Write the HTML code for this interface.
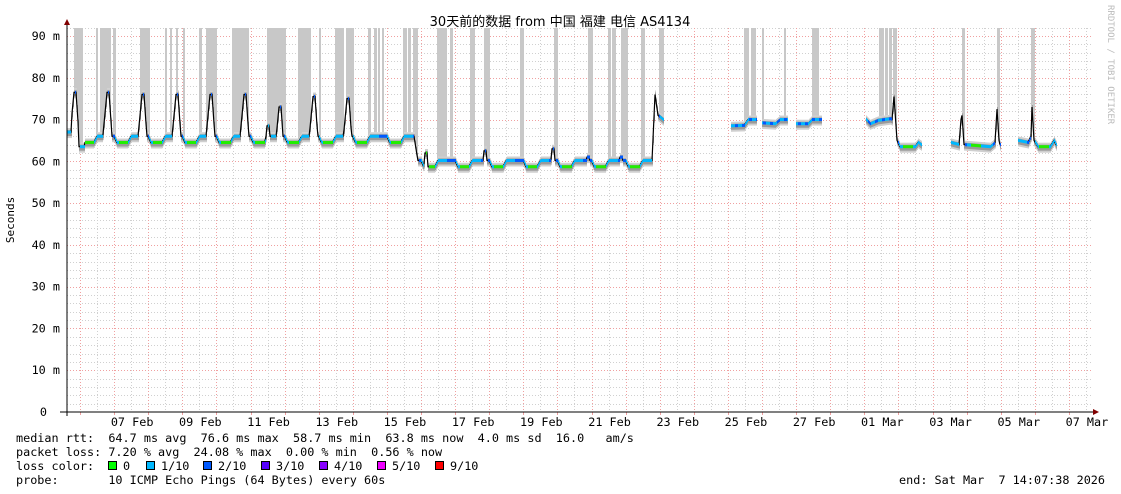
<!DOCTYPE html>
<html><head><meta charset="utf-8"><style>
html,body{margin:0;padding:0;background:#fff;}
svg{display:block;}
text{font-family:"DejaVu Sans Mono","Liberation Mono",monospace;font-size:11.8px;fill:#000;}
</style></head><body>
<svg id="s" width="1121" height="494" xmlns="http://www.w3.org/2000/svg">
<rect width="1121" height="494" fill="#fff"/>
<g id="grid"></g>
<g id="bars"></g>
<g id="data"></g>
<line x1="67" y1="24" x2="67" y2="416" stroke="#000" stroke-width="1"/>
<line x1="60" y1="412" x2="1094" y2="412" stroke="#000" stroke-width="1"/>
<polygon points="64,25 70,25 67,19" fill="#800000"/>
<polygon points="1093,409 1093,415 1099,412" fill="#800000"/>
<text x="560" y="26" text-anchor="middle" style="font-family:'DejaVu Sans','Noto Sans CJK SC',sans-serif;font-size:13px">30天前的数据 from  中国 福建 电信 AS4134</text>
<text transform="translate(14,220) rotate(-90)" text-anchor="middle" style="font-size:11px">Seconds</text>
<text transform="translate(1108,5) rotate(90)" style="font-size:9px;fill:#bbb">RRDTOOL / TOBI OETIKER</text>
<g id="ylab"></g>
<g id="xlab"></g>
<text x="16" y="442" xml:space="preserve">median rtt:  64.7 ms avg  76.6 ms max  58.7 ms min  63.8 ms now  4.0 ms sd  16.0   am/s</text>
<text x="16" y="456" xml:space="preserve">packet loss: 7.20 % avg  24.08 % max  0.00 % min  0.56 % now</text>
<text x="16" y="470" xml:space="preserve">loss color:</text>
<text x="16" y="484" xml:space="preserve">probe:       10 ICMP Echo Pings (64 Bytes) every 60s</text>
<text x="1105" y="484" text-anchor="end" xml:space="preserve">end: Sat Mar  7 14:07:38 2026</text>
<g id="leg"></g>
</svg>
<script>
var NS="http://www.w3.org/2000/svg";
function el(p,t,a,txt){var e=document.createElementNS(NS,t);for(var k in a)e.setAttribute(k,a[k]);if(txt!=null)e.textContent=txt;document.getElementById(p).appendChild(e);return e;}
function Y(v){return 412-v*4.178;}
for(var v=2;v<=92;v+=2){var y=Math.round(Y(v))+0.5;var maj=(v%10==0);
el('grid','line',{x1:67,x2:1093,y1:y,y2:y,stroke:maj?'#f0a0a0':'#d0d0d0','stroke-dasharray':'1,2','stroke-width':1});}
var D=34.1;
for(var k=-1;k<32;k++){var xr=80+D*k,xm=xr+D/2;
if(xm>67&&xm<1093)el('grid','line',{x1:Math.round(xm)+0.5,x2:Math.round(xm)+0.5,y1:28,y2:412,stroke:'#d0d0d0','stroke-dasharray':'1,2'});
if(xr>67&&xr<1093){el('grid','line',{x1:Math.round(xr)+0.5,x2:Math.round(xr)+0.5,y1:28,y2:412,stroke:'#f0a0a0','stroke-dasharray':'1,2'});
el('grid','line',{x1:Math.round(xr)+0.5,x2:Math.round(xr)+0.5,y1:412,y2:415,stroke:'#f0a0a0'});}}
for(var v=10;v<=90;v+=10)el('ylab','text',{x:60,y:Y(v)+4,'text-anchor':'end'},v+' m');
el('ylab','text',{x:47,y:416,'text-anchor':'end'},'0');
var labs=['07 Feb','09 Feb','11 Feb','13 Feb','15 Feb','17 Feb','19 Feb','21 Feb','23 Feb','25 Feb','27 Feb','01 Mar','03 Mar','05 Mar','07 Mar'];
for(var i=0;i<labs.length;i++)el('xlab','text',{x:81+D*(1.5+2*i),y:426,'text-anchor':'middle'},labs[i]);
var lc=[['#00ff00','0',108],['#00b8ff','1/10',146],['#0059ff','2/10',203],['#5500ff','3/10',261],['#8800ff','4/10',319],['#ee00ff','5/10',377],['#ff0000','9/10',435]];
lc.forEach(function(c){el('leg','rect',{x:c[2]+0.5,y:461.5,width:8,height:8,fill:c[0],stroke:'#000'});el('leg','text',{x:c[2]+15,y:470},c[1]);});
function tt(x){var t=((x-80)/D)%1;if(t<0)t+=1;return t;}
function base(x,off){var t=tt(x),b;
if(t<0.08)b=66-t/0.08*1.5;else if(t<0.4)b=64.5;else if(t<0.5)b=64.5+(t-0.4)/0.1*1.5;else b=66;return b+off;}
function spike(x,b,list){var v=b;list.forEach(function(s){var d=Math.abs(x-s[0]);var h=s[1]-(d<=1?0:(d-1)*(x<s[0]?2.5:3.5));if(h>v)v=h;});return v;}
var s1=[[75,76.5],[108,76.5],[143,76],[177,76],[211,76],[245,76],[268,68.5],[280,73],[314,75.5],[348,75]];
var s2=[[426,62],[485,62.5],[553,63],[588,61],[621,61]];
function lin(x,pts){for(var i=0;i<pts.length-1;i++){if(x>=pts[i][0]&&x<=pts[i+1][0]){var a=pts[i],b=pts[i+1];return a[1]+(b[1]-a[1])*(x-a[0])/(b[0]-a[0]||1);}}return null;}
function f(x){
if(x<67)return null;
if(x<72)return 67;
if(x<405){if(x>=79&&x<=84)return 63.5;return spike(x,base(x,0),s1);}
if(x<418)return lin(x,[[405,66],[414,66],[418,60]]);
if(x<=652)return spike(x,base(x,-5.8),s2);
if(x<=663)return lin(x,[[652,60],[655,76],[658,71],[663,70]]);
if(x>=731&&x<=756)return lin(x,[[731,68.5],[744,68.6],[748,70],[756,70]]);
if(x>=762&&x<=787)return lin(x,[[762,69.2],[775,69],[780,70],[787,70]]);
if(x>=796&&x<=821)return lin(x,[[796,69],[808,69],[812,70],[821,70]]);
if(x>=866&&x<=921)return lin(x,[[866,70],[870,69],[878,69.8],[890,70.2],[892,70],[894,75.5],[897,65],[900,63.5],[915,63.5],[918,64.5],[921,64]]);
if(x>=951&&x<=1000)return lin(x,[[951,64.5],[959,64],[961,70],[962,71],[964,64],[990,63.5],[995,64.5],[997,72.5],[999,65],[1000,64]]);
if(x>=1018&&x<=1056)return lin(x,[[1018,65],[1028,64.5],[1031,66],[1032,73],[1034,65],[1038,63.5],[1050,63.5],[1054,65],[1056,64]]);
return null;}
var bars=[[74,82],[96,97],[100,110],[113,115],[140,149],[165,166],[170,171],[176,177],[183,184],[199,201],[206,216],[232,248],[267,285],[298,310],[319,320],[335,343],[346,353],[368,370],[374,376],[378,379],[382,383],[403,406],[408,410],[413,417],[437,446],[450,452],[470,474],[484,489],[520,523],[554,557],[588,592],[608,610],[612,615],[621,627],[641,644],[659,663],[744,748],[751,755],[762,763],[784,785],[812,818],[879,883],[885,887],[889,891],[893,896],[962,964],[997,999],[1031,1034]];
bars.forEach(function(b){for(var x=b[0];x<=b[1];x++){var v=f(x);if(v==null)continue;var y=Y(v)-4;el('bars','rect',{x:x,y:28,width:1,height:Math.max(0,y-28),fill:'#c8c8c8'});}});
var pts=[],segs=[];
for(var x=67;x<=1060;x++){var v=f(x);if(v==null){if(pts.length)segs.push(pts);pts=[];continue;}
var y=Y(v);pts.push([x,y]);
el('data','rect',{x:x,y:y-4,width:1,height:10,fill:'#cfcfcf'});
el('data','rect',{x:x,y:y-2,width:1,height:6,fill:'#9a9a9a'});}
if(pts.length)segs.push(pts);
segs.forEach(function(p){el('data','polyline',{points:p.map(function(q){return q[0]+','+q[1].toFixed(1);}).join(' '),fill:'none',stroke:'#000','stroke-width':1.2});});
for(var x=67;x<=1060;x++){var v=f(x);if(v==null)continue;var vp=f(x-1),vn=f(x+1);
if(vp!=null&&vn!=null&&(Math.abs(vp-v)>1.2||Math.abs(vn-v)>1.2))continue;
var t=tt(x),c;if(v>68.5&&v<71&&x>700)c=(x%7<3)?'#0059ff':'#00b8ff';
else if(t>0.12&&t<0.4)c='#22ee00';else if(t<0.75)c='#00b8ff';else c='#0059ff';
el('data','rect',{x:x,y:Y(v)-1.5,width:1,height:3,fill:c});}
</script>
</body></html>
